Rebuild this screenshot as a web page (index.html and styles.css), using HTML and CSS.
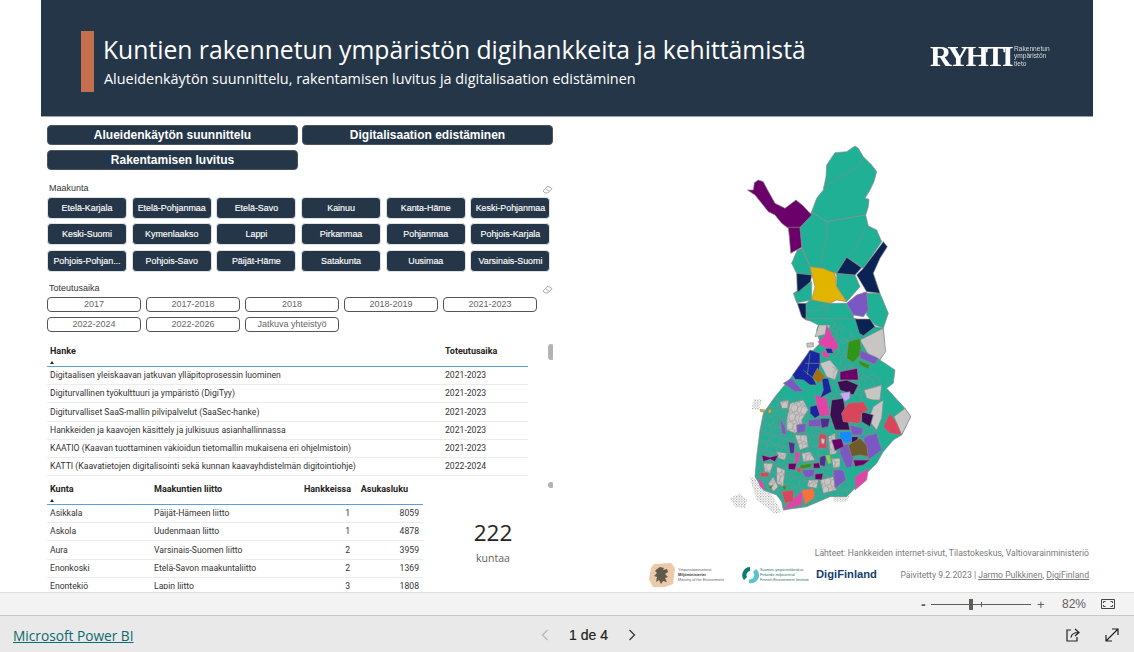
FILE: index.html
```html
<!DOCTYPE html>
<html lang="fi">
<head>
<meta charset="utf-8">
<title>Kuntien rakennetun ympäristön digihankkeita ja kehittämistä</title>
<link rel="stylesheet" href="styles.css">
</head>
<body>
<main class="report">
  <header class="banner">
    <div class="accent"></div>
    <div class="titles">
      <h1>Kuntien rakennetun ympäristön digihankkeita ja kehittämistä</h1>
      <p>Alueidenkäytön suunnittelu, rakentamisen luvitus ja digitalisaation edistäminen</p>
    </div>
    <div class="ryhti">
      <span class="ryhti-mark">RYHTI</span>
      <span class="ryhti-text">Rakennetun<br>ympäristön<br>tieto</span>
    </div>
  </header>
  <div class="body">
    <section class="left">
      <div class="topics">
        <button class="topic">Alueidenkäytön suunnittelu</button>
        <button class="topic">Digitalisaation edistäminen</button>
        <button class="topic">Rakentamisen luvitus</button>
      </div>
      <div class="slicer-head maakunta-head">
        <span>Maakunta</span>
        <svg class="eraser" viewBox="0 0 12 10"><path d="M1 6.5 6.5 1.2 11 4 6.5 8.8H3Z M3.6 3.9 8 7"/></svg>
      </div>
      <div class="regions">
        <button class="region">Etelä-Karjala</button>
        <button class="region">Etelä-Pohjanmaa</button>
        <button class="region">Etelä-Savo</button>
        <button class="region">Kainuu</button>
        <button class="region">Kanta-Häme</button>
        <button class="region">Keski-Pohjanmaa</button>
        <button class="region">Keski-Suomi</button>
        <button class="region">Kymenlaakso</button>
        <button class="region">Lappi</button>
        <button class="region">Pirkanmaa</button>
        <button class="region">Pohjanmaa</button>
        <button class="region">Pohjois-Karjala</button>
        <button class="region">Pohjois-Pohjan...</button>
        <button class="region">Pohjois-Savo</button>
        <button class="region">Päijät-Häme</button>
        <button class="region">Satakunta</button>
        <button class="region">Uusimaa</button>
        <button class="region">Varsinais-Suomi</button>
      </div>
      <div class="slicer-head period-head">
        <span>Toteutusaika</span>
        <svg class="eraser" viewBox="0 0 12 10"><path d="M1 6.5 6.5 1.2 11 4 6.5 8.8H3Z M3.6 3.9 8 7"/></svg>
      </div>
      <div class="periods">
        <button class="period">2017</button>
        <button class="period">2017-2018</button>
        <button class="period">2018</button>
        <button class="period">2018-2019</button>
        <button class="period">2021-2023</button>
        <button class="period">2022-2024</button>
        <button class="period">2022-2026</button>
        <button class="period">Jatkuva yhteistyö</button>
      </div>
      <div class="projects">
        <div class="thumb"></div>
        <div class="dot"></div>
        <table class="grid project-table">
          <thead><tr><th>Hanke<i class="sort"></i></th><th class="col-time">Toteutusaika</th></tr></thead>
          <tbody>
            <tr><td>Digitaalisen yleiskaavan jatkuvan ylläpitoprosessin luominen</td><td>2021-2023</td></tr>
            <tr><td>Digiturvallinen työkulttuuri ja ympäristö (DigiTyy)</td><td>2021-2023</td></tr>
            <tr><td>Digiturvalliset SaaS-mallin pilvipalvelut (SaaSec-hanke)</td><td>2021-2023</td></tr>
            <tr><td>Hankkeiden ja kaavojen käsittely ja julkisuus asianhallinnassa</td><td>2021-2023</td></tr>
            <tr><td>KAATIO (Kaavan tuottaminen vakioidun tietomallin mukaisena eri ohjelmistoin)</td><td>2021-2023</td></tr>
            <tr><td>KATTI (Kaavatietojen digitalisointi sekä kunnan kaavayhdistelmän digitointiohje)</td><td>2022-2024</td></tr>
          </tbody>
        </table>
      </div>
      <div class="lower">
        <div class="muni-wrap">
          <table class="grid muni-table">
            <thead><tr><th class="c1">Kunta<i class="sort"></i></th><th class="c2">Maakuntien liitto</th><th class="c3 num">Hankkeissa</th><th class="c4 num">Asukasluku</th></tr></thead>
            <tbody>
              <tr><td>Asikkala</td><td>Päijät-Hämeen liitto</td><td class="num">1</td><td class="num">8059</td></tr>
              <tr><td>Askola</td><td>Uudenmaan liitto</td><td class="num">1</td><td class="num">4878</td></tr>
              <tr><td>Aura</td><td>Varsinais-Suomen liitto</td><td class="num">2</td><td class="num">3959</td></tr>
              <tr><td>Enonkoski</td><td>Etelä-Savon maakuntaliitto</td><td class="num">2</td><td class="num">1369</td></tr>
              <tr><td>Enontekiö</td><td>Lapin liitto</td><td class="num">3</td><td class="num">1808</td></tr>
            </tbody>
          </table>
        </div>
        <div class="kpi"><strong>222</strong><span>kuntaa</span></div>
      </div>
    </section>
    <section class="right">
      <svg class="map" viewBox="720 140 210 380" role="img" aria-label="Suomen kartta">
        <defs>
          <pattern id="cells" width="30" height="27" patternUnits="userSpaceOnUse" patternTransform="rotate(14)">
            <path d="M0 7 10 0 20 7V20L10 27 0 20ZM20 7 30 0M20 20 30 27" fill="none" stroke="#6f7f7b" stroke-width="2.800"/>
          </pattern>
          <pattern id="cells2" width="44" height="40" patternUnits="userSpaceOnUse" patternTransform="rotate(-9)">
            <path d="M0 10 15 0 30 10V30L15 40 0 30ZM30 10 44 0M30 30 44 40" fill="none" stroke="#6f7f7b" stroke-width="2.400"/>
          </pattern>
          <pattern id="isles" width="8" height="8" patternUnits="userSpaceOnUse">
            <circle cx="2" cy="2" r="1.900" fill="#8d8d8d"/><circle cx="6" cy="6" r="1.500" fill="#9a9a9a"/>
          </pattern>
        </defs>
        <g class="north" transform="translate(720 140) scale(.3333)">
          <path class="teal" d="M405 18 415 25 430 50 455 75 470 95 462 125 450 150 435 175 447 178 445 200 437 225 320 245 275 215 290 175 310 150 318 110 320 75 345 38 380 35Z"/>
          <path class="line" d="M425 55 420 75 380 100 310 140"/>
          <path class="teal" d="M275 215 320 245 437 225 445 258 470 270 485 305 430 385 380 352 350 400 270 380 245 322 240 262Z"/>
          <path class="line" d="M320 245 322 290 310 330 300 385M437 262 415 310 380 350M245 325 265 375"/>
          <path class="purple" d="M115 120 130 125 140 145 165 190 195 205 228 180 250 198 275 225 240 262 245 322 212 340 208 290 205 265 185 250 165 225 145 215 125 190 105 165 82 150 100 150 103 128Z"/>
          <path class="line" d="M200 262 240 262"/>
          <path class="teal" d="M215 370 232 330 245 325 270 380 275 405 230 400Z"/>
          <path class="teal" d="M350 400 405 405 420 440 380 485 350 440Z"/>
          <path class="teal" d="M440 460 480 460 505 520 490 565 465 555 440 525Z"/>
          <path class="teal" d="M220 460 275 425 275 480 230 488Z"/>
          <path class="teal" d="M258 490 275 478 330 490 380 490 400 525 402 570 335 575 290 545 258 540Z"/>
          <path class="line" d="M258 512 295 510M290 500 320 495 310 525 285 545M330 490 320 520"/>
          <path class="navy" d="M490 305 502 320 480 355 460 400 480 460 440 455 410 405 430 385Z"/>
          <path class="navy" d="M380 352 425 383 405 405 350 400Z"/>
          <path class="navy" d="M230 400 275 405 272 425 232 458Z"/>
          <path class="navy" d="M232 490 258 490 258 540 245 530Z"/>
          <path class="gold" d="M270 380 310 385 345 400 350 440 380 485 350 480 330 490 275 480 285 440Z"/>
          <path class="violet" d="M380 490 410 465 440 455 445 510 430 530 400 525Z"/>
        </g>
        <g class="south" transform="translate(720 320) scale(.3333)">
          <path class="isle-mass" d="M30 535 60 520 82 540 75 565 45 560Z"/>
          <path class="isle-mass" d="M88 470 130 480 185 575 165 582 110 540Z"/>
          <path class="isle-mass" d="M100 238 125 238 118 270 95 268Z"/>
          <path class="isle-mass" d="M340 525 400 500 380 545 340 545Z"/>
          <path class="teal" d="M255 -5 330 -5 405 -5 465 20 490 25 495 95 480 120 525 150 520 190 500 205 555 265 572 290 545 345 520 360 490 395 470 430 440 460 400 510 380 530 330 530 260 560 190 570 185 545 170 525 130 510 105 470 110 410 120 330 130 280 165 230 215 170 250 120 280 90 300 70 290 30 295 15Z"/>
          <path class="grey" d="M285 50 297 15 330 15 322 42Z"/>
          <path class="grey" d="M420 60 490 25 497 95 480 118 450 112Z"/>
          <path class="grey" d="M300 130 330 120 355 150 345 180 320 170Z"/>
          <path class="grey" d="M432 210 485 195 480 240 460 240 440 235Z"/>
          <path class="grey" d="M522 290 555 265 572 290 545 345Z"/>
          <path class="grey" d="M260 70 280 68 280 80 262 82Z"/>
          <path class="grey" d="M210 250 250 240 265 270 245 300 250 325 225 340 200 330 200 300Z"/>
          <path class="grey" d="M225 345 260 345 265 380 240 390Z"/>
          <path class="grey" d="M170 440 195 450 190 500 170 490Z"/>
          <path class="grey" d="M300 480 340 470 350 510 310 520Z"/>
          <path class="grey" d="M460 260 490 240 485 295 470 330 445 300Z"/>
          <path class="grey" d="M130 430 160 430 150 460 135 455Z"/>
          <path class="grey" d="M245 400 270 395 285 420 250 425Z"/>
          <path class="grey" d="M325 350 345 340 350 400 330 405Z"/>
          <path class="grey" d="M160 470 175 500 160 515 145 490Z"/>
          <path class="grey" d="M265 480 295 480 290 505 262 500Z"/>
          <path class="grey" d="M170 395 200 400 195 420 175 415Z"/>
          <path class="grey" d="M180 245 205 240 205 265 185 265Z"/>
          <path class="grey" d="M335 415 360 415 360 440 340 445Z"/>
          <path class="cells" d="M110 410 120 330 130 280 165 230 215 240 250 230 270 300 340 340 350 420 400 510 380 530 330 530 260 560 190 570 185 545 170 525 130 510 105 470Z"/>
          <path class="cells-wide" d="M330 -5 405 40 400 130 440 150 520 190 440 210 430 310 480 330 450 420 400 430 340 350 280 250 340 190Z"/>
          <path class="pink" d="M320 15 345 60 357 80 340 95 300 75 295 65 315 45Z"/>
          <path class="pink" d="M285 225 320 235 330 285 295 290Z"/>
          <path class="pink" d="M405 470 445 445 440 480 405 510Z"/>
          <path class="pink" d="M200 555 250 510 245 555 190 570Z"/>
          <path class="pink" d="M315 90 330 110 315 115 305 100Z"/>
          <path class="pink" d="M225 395 240 400 235 430 225 430Z"/>
          <path class="pink" d="M115 475 130 490 135 510 120 500Z"/>
          <path class="navy" d="M405 -3 450 -3 465 20 430 47 418 40Z"/>
          <path class="blue" d="M270 90 300 100 300 130 295 160 280 175 290 195 270 195 250 180 225 178 218 165 250 120Z"/>
          <path class="line" d="M255 130 300 130M250 150 280 175M270 100 262 165"/>
          <path class="blue" d="M305 175 325 175 335 215 300 235 310 210Z"/>
          <path class="blue" d="M270 260 290 255 300 285 285 295 270 280Z"/>
          <path class="blue" d="M315 85 335 85 340 100 322 100Z"/>
          <path class="brown" d="M292 145 315 170 295 190 278 172Z"/>
          <path class="green" d="M385 65 420 55 425 100 400 128 380 115Z"/>
          <path class="green" d="M415 120 450 135 445 148 420 135Z"/>
          <path class="green" d="M240 435 275 430 272 442 240 448Z"/>
          <path class="green" d="M145 500 160 495 150 508Z"/>
          <path class="green" d="M185 500 200 495 195 512Z"/>
          <path class="violet" d="M420 90 475 115 465 133 420 115Z"/>
          <path class="violet" d="M190 190 215 175 250 215 225 215Z"/>
          <path class="violet" d="M265 300 310 295 305 320 265 320Z"/>
          <path class="violet" d="M230 315 258 310 255 335 232 340Z"/>
          <path class="violet" d="M360 375 410 370 395 440 380 445 360 400Z"/>
          <path class="violet" d="M430 350 470 340 485 390 445 420 435 380Z"/>
          <path class="violet" d="M340 450 370 450 378 480 345 505Z"/>
          <path class="violet" d="M390 315 430 325 425 345 395 345Z"/>
          <path class="violet" d="M180 295 195 320 200 345 185 340Z"/>
          <path class="violet" d="M245 450 285 448 280 470 255 472Z"/>
          <path class="purple" d="M360 155 412 145 415 180 360 180Z"/>
          <path class="purple" d="M335 360 365 355 372 380 345 392Z"/>
          <path class="purple" d="M125 405 150 412 175 405 165 425 150 418 130 425Z"/>
          <path class="purple" d="M400 420 450 420 430 435 405 440Z"/>
          <path class="purple" d="M280 430 300 428 300 445 280 445Z"/>
          <path class="purple" d="M205 430 230 430 225 450 205 448Z"/>
          <path class="purple" d="M285 462 310 460 305 480 285 478Z"/>
          <path class="plum" d="M352 185 380 180 415 195 400 225 360 210Z"/>
          <path class="plum" d="M335 240 370 235 375 265 390 330 345 330 330 285Z"/>
          <path class="plum" d="M425 275 460 285 450 320 425 305Z"/>
          <path class="plum" d="M390 350 415 350 410 375 395 370Z"/>
          <path class="lilac" d="M360 220 390 215 390 235 375 245Z"/>
          <path class="sky" d="M360 335 395 335 395 365 375 370 358 350Z"/>
          <path class="sky" d="M390 262 403 265 400 283 388 280Z"/>
          <path class="sky" d="M420 345 440 350 425 355Z"/>
          <path class="red" d="M365 280 385 250 430 245 445 270 425 280 420 310 370 305Z"/>
          <path class="red" d="M490 320 510 280 530 310 545 345 510 340Z"/>
          <path class="red" d="M185 515 220 510 220 545 195 550Z"/>
          <path class="red" d="M298 340 320 345 320 385 295 385Z"/>
          <path class="red" d="M120 458 145 458 145 470 122 470Z"/>
          <path class="red" d="M232 442 245 445 240 458 230 455Z"/>
          <path class="grey" d="M303 355 315 358 312 372 304 370Z"/>
          <path class="olive" d="M385 375 420 355 440 375 445 410 420 405 395 410Z"/>
          <path class="orange" d="M245 510 280 505 285 530 255 555Z"/>
          <path class="gold" d="M145 268 155 270 152 280 145 278Z"/>
          <path class="gold" d="M120 268 135 270 132 276 122 275Z"/>
          <path class="indigo" d="M300 295 330 295 325 320 305 325Z"/>
          <path class="indigo" d="M205 365 225 370 222 400 210 400Z"/>
          <path class="indigo" d="M300 410 320 405 315 440 298 435Z"/>
          <path class="lime" d="M315 405 330 405 335 430 325 432Z"/>
        </g>
      </svg>
      <div class="credits">
        <p class="sources">Lähteet: Hankkeiden internet-sivut, Tilastokeskus, Valtiovarainministeriö</p>
        <div class="credit-row">
          <div class="org org-ym">
            <svg class="lion" viewBox="0 0 26 25"><path class="lion-bg" d="M5 1 22 0 26 5 24 21 16 24 4 24 0 16 2 5Z"/><path class="lion-fg" d="M8 6 11 4 15 5 14 7 18 6 19 9 16 11 19 14 16 15 18 19 14 18 12 21 10 17 7 19 8 14 5 13 8 10 6 8Z"/></svg>
            <span class="org-text">Ympäristöministeriö<br><b>Miljöministeriet</b><br>Ministry of the Environment</span>
          </div>
          <div class="org org-syke">
            <svg class="syke" viewBox="0 0 18 18"><path class="syke-a" d="M9 1A8 8 0 0 0 3 14L6 11A4 4 0 0 1 9 5Z"/><path class="syke-b" d="M15 3A8 8 0 0 1 8 17L8 13.5A4.5 4.5 0 0 0 12 6Z"/></svg>
            <span class="org-text syke-text">Suomen ympäristökeskus<br>Finlands miljöcentral<br>Finnish Environment Institute</span>
          </div>
          <div class="digifinland">DigiFinland</div>
          <p class="updated">Päivitetty 9.2.2023 | <a href="#">Jarmo Pulkkinen</a>, <a href="#">DigiFinland</a></p>
        </div>
      </div>
    </section>
  </div>
</main>
<div class="zoombar">
  <span class="zoom-minus">-</span>
  <div class="slider"><i class="slider-knob"></i><i class="slider-mid"></i></div>
  <span class="zoom-plus">+</span>
  <span class="zoom-value">82%</span>
  <svg class="fit" viewBox="0 0 14 10"><path d="M.5 .5h13v9H.5Z"/><path d="M2.5 4V2.5H4.5M9.500 2.500H11.500V4M11.500 6V7.500H9.500M4.500 7.500H2.500V6"/></svg>
</div>
<footer class="pbar">
  <a class="pbi" href="#">Microsoft Power BI</a>
  <nav class="pager">
    <svg class="chev chev-off" viewBox="0 0 8 12"><path d="M6.500 1 1.500 6 6.500 11"/></svg>
    <span>1 de 4</span>
    <svg class="chev" viewBox="0 0 8 12"><path d="M1.500 1 6.500 6 1.500 11"/></svg>
  </nav>
  <div class="actions">
    <svg class="act" viewBox="0 0 16 16"><path d="M6 3H2V14H12V10M6 10.500C6.500 7 9 5.500 13.500 5.500M10 2 14 5.500 10 9"/></svg>
    <svg class="act" viewBox="0 0 16 16"><path d="M2 14 14 2M8 2H14V8M2 8V14H8"/></svg>
  </div>
</footer>
</body>
</html>
```
FILE: styles.css
```css
* { box-sizing: border-box; }
html, body { margin: 0; padding: 0; }
body { width: 1134px; height: 652px; overflow: hidden; background: #fff; font-family: "Open Sans", "Noto Sans", sans-serif; color: #252423; }
button { font-family: "Liberation Sans", Arial, sans-serif; cursor: pointer; padding: 0; }

.report { width: 1052px; height: 592px; margin: 0 41px; overflow: hidden; background: #fff; }

.banner { height: 117px; background: #253648; border-bottom: 1px solid #9aa3ad; display: flex; align-items: flex-start; padding: 31px 0 0 40px; color: #fff; }
.accent { width: 13px; height: 61px; background: #c4704f; flex: none; }
.titles { margin-left: 9px; width: 790px; flex: none; }
.titles h1 { margin: 2px 0 0; font-size: 24.700px; line-height: 34px; font-weight: 400; white-space: nowrap; }
.titles p { margin: 2px 0 0 1px; font-size: 14.400px; line-height: 20px; white-space: nowrap; }
.ryhti { display: flex; align-items: center; margin: 12px 0 0 37px; filter: blur(.35px); }
.ryhti-mark { font-family: "Liberation Serif", serif; font-weight: 700; font-size: 30px; line-height: 26px; letter-spacing: -3.400px; width: 84px; }
.ryhti-text { font-family: "Liberation Sans", sans-serif; font-size: 6.600px; line-height: 7.500px; color: #d5dade; }

.body { display: flex; height: 475px; }
.left { width: 512px; flex: none; padding: 8px 0 0 6px; overflow: hidden; }

.topics { display: grid; grid-template-columns: 251px 251px; column-gap: 4px; row-gap: 5px; }
.topic { height: 20px; background: #253648; color: #fff; border: 1px solid #4a5560; border-radius: 4px; font-size: 12px; font-weight: 700; }

.slicer-head { display: flex; justify-content: space-between; align-items: center; width: 506px; height: 12px; font-family: "Liberation Sans", sans-serif; font-size: 9px; color: #333; padding-left: 2px; }
.maakunta-head { margin-top: 12px; }
.period-head { margin-top: 10px; width: 506px; }
.eraser { width: 11px; height: 9px; margin-top: 3px; fill: none; stroke: #9a9a9a; stroke-width: .9; }

.regions { display: grid; grid-template-columns: repeat(6, 80px); column-gap: 4.700px; row-gap: 4.400px; margin-top: 3px; }
.region { height: 22px; background: #253648; color: #fff; border: 1px solid #dfe2e5; border-radius: 4px; font-size: 8.900px; white-space: nowrap; outline: 0; -webkit-text-stroke: .15px #fff; }

.periods { display: grid; grid-template-columns: repeat(5, 94px); column-gap: 5px; row-gap: 5px; margin-top: 3px; }
.period { height: 15px; background: #fff; color: #666; border: 1px solid #555; border-radius: 4px; font-size: 9px; white-space: nowrap; }

.projects { position: relative; margin-top: 12px; width: 506px; height: 138px; }
.thumb { position: absolute; left: 501px; top: 0; width: 6px; height: 16px; background: #b3b3b3; border-radius: 3px; }
.dot { position: absolute; left: 501px; top: 138px; width: 6px; height: 6px; background: #b3b3b3; border-radius: 50%; }

.grid { border-collapse: collapse; table-layout: fixed; font-family: Roboto, "Open Sans", sans-serif; font-size: 8.650px; color: #333; }
.grid th { position: relative; height: 23px; text-align: left; font-size: 9px; font-weight: 700; color: #252423; padding: 0 0 9px 3px; border-bottom: 1px solid #5c9ee0; white-space: nowrap; }
.grid td { height: 18.100px; padding: 0 0 1px 3px; border-bottom: 1px solid #ececec; white-space: nowrap; overflow: hidden; line-height: 12px; }
.sort { position: absolute; left: 3px; bottom: 2px; width: 0; height: 0; border: 2.500px solid transparent; border-top: 0; border-bottom: 3px solid #252423; }

.project-table { width: 481px; }
.col-time { width: 86px; }

.lower { display: flex; height: 109px; }
.muni-wrap { width: 376px; height: 107px; overflow: hidden; flex: none; }
.muni-table { width: 376px; }
.c1 { width: 104px; }
.c2 { width: 138px; }
.c3 { width: 65px; }
.c4 { width: 69px; }
.grid .num { text-align: right; padding: 0 4px 1px 0; }
.grid th.num { padding: 0 3px 9px 0; }
.grid th.c4 { padding-right: 15px; }

.kpi { width: 140px; flex: none; display: flex; flex-direction: column; align-items: center; padding-top: 37px; }
.kpi strong { font-weight: 400; font-size: 22.500px; line-height: 28px; color: #252423; }
.kpi span { font-size: 10.500px; line-height: 14px; margin-top: 4px; color: #605e5c; }

.right { flex: 1; min-width: 0; display: flex; flex-direction: column; padding: 23px 4px 0 96px; }
.map { width: 210px; height: 380px; margin-left: 71px; flex: none; display: block; filter: blur(.25px); }
.map path { stroke-linejoin: round; stroke: #8a8a8a; stroke-width: 2; }
.map .line { fill: none; stroke: #7f8c88; stroke-width: 2; }
.map .teal { fill: #20b096; }
.map .purple { fill: #6b006b; }
.map .navy { fill: #0b2354; }
.map .gold { fill: #e1b400; }
.map .violet { fill: #7a58c4; }
.map .grey { fill: #c8c6c4; }
.map .pink { fill: #e044a7; }
.map .blue { fill: #1727a0; }
.map .brown { fill: #a66f0c; }
.map .green { fill: #2f9417; }
.map .plum { fill: #3a0f52; }
.map .lilac { fill: #c4a8ff; }
.map .sky { fill: #118dff; }
.map .red { fill: #d9455a; }
.map .olive { fill: #6f5a2c; }
.map .orange { fill: #f2743a; }
.map .indigo { fill: #4b3090; }
.map .lime { fill: #6fdc5a; }
.map .cells { fill: url(#cells); stroke: none; }
.map .cells-wide { fill: url(#cells2); stroke: none; }
.map .isle-mass { fill: url(#isles); stroke: none; }

.credits { margin-top: 27px; font-family: Roboto, "Open Sans", sans-serif; font-size: 8.650px; color: #7a7a7a; }
.sources { margin: 0; text-align: right; line-height: 12px; white-space: nowrap; }
.credit-row { display: flex; align-items: center; height: 24px; margin-top: 4px; }
.org { display: flex; align-items: center; flex: none; }
.org-ym { width: 92px; }
.org-syke { width: 75px; }
.lion { width: 26px; height: 25px; flex: none; }
.lion-bg { fill: #ecc9a8; }
.lion-fg { fill: #5f5a4c; }
.syke { width: 18px; height: 18px; flex: none; }
.syke-a { fill: #0c7c72; }
.syke-b { fill: #57c3cf; }
.org-text { font-family: "Liberation Sans", sans-serif; font-size: 3.800px; line-height: 5px; margin-left: 3px; color: #5f5f5f; white-space: nowrap; }
.org-text b { color: #333; }
.syke-text { color: #2f6f68; margin-left: 1px; }
.digifinland { width: 78px; flex: none; font-family: "Liberation Sans", sans-serif; font-weight: 700; font-size: 11.200px; color: #13406f; margin-top: -3px; }
.updated { margin: 0 0 0 auto; white-space: nowrap; line-height: 12px; }
.updated a { color: #7a7a7a; }

.zoombar { height: 24px; background: #f3f3f3; border-top: 1px solid #dedede; border-bottom: 1px solid #c8c8c8; display: flex; align-items: center; padding-left: 921px; font-family: "Liberation Sans", sans-serif; color: #605e5c; }
.zoom-minus { width: 10px; font-size: 14px; font-weight: 700; }
.slider { position: relative; width: 100px; height: 1px; background: #605e5c; }
.slider-knob { position: absolute; left: 38px; top: -5px; width: 4px; height: 11px; background: #605e5c; }
.slider-mid { position: absolute; left: 50px; top: -2px; width: 1px; height: 5px; background: #605e5c; }
.zoom-plus { margin-left: 6px; width: 13px; font-size: 13px; }
.zoom-value { margin-left: 12px; font-size: 12px; width: 39px; }
.fit { width: 14px; height: 10px; fill: none; stroke: #444; stroke-width: 1; }

.pbar { height: 36px; background: #e9e9e9; display: flex; align-items: center; padding: 2px 14px 0 13px; }
.pbi { font-size: 13.700px; color: #0b6a6e; width: 528px; flex: none; }
.pager { display: flex; align-items: center; font-family: "Liberation Sans", sans-serif; font-size: 14px; color: #222; -webkit-text-stroke: .2px #222; }
.pager span { margin: 0 20px; }
.chev { width: 8px; height: 12px; fill: none; stroke: #333; stroke-width: 1.200; }
.chev-off { stroke: #b5b5b5; }
.actions { display: flex; gap: 23px; margin-left: auto; }
.act { width: 16px; height: 16px; fill: none; stroke: #222; stroke-width: 1.200; }
```
